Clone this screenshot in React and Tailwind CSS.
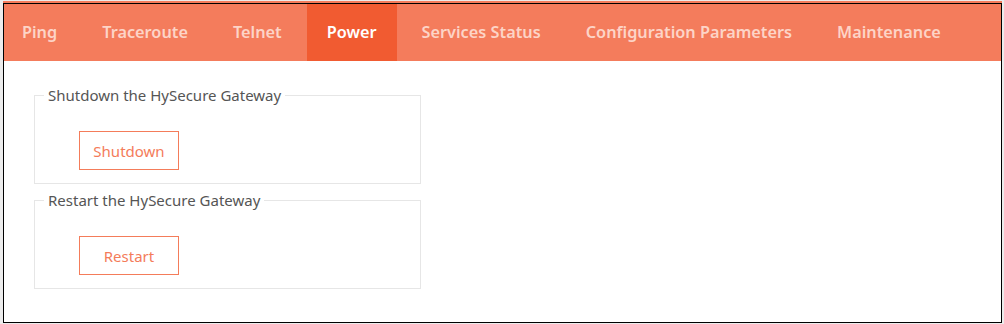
import React from 'react';

const tabs = ['Ping', 'Traceroute', 'Telnet', 'Power', 'Services Status', 'Configuration Parameters', 'Maintenance'];

const Section = ({ title, label }) => (
    <fieldset className="w-[387px] h-[99px] border border-[#e6e6e6] pl-[9px] pt-[26px] m-0">
        <legend className="px-[4px] text-[15px] leading-[20px] text-[#555555]">{title}</legend>
        <button className="ml-[35px] w-[100px] h-[39px] pt-px border border-[#f47c5a] text-[#f47c5a] text-[15px] bg-white">
            {label}
        </button>
    </fieldset>
);

const App = () => {
    const active = 'Power';

    return (
        <div className="w-[1004px] h-[324px] bg-[#ececec] pt-px pl-[3px] pr-[2px]" style={{ fontFamily: '"Noto Sans", "Open Sans", sans-serif' }}>
            <div className="h-[2px] bg-[#f47c5c]" />
            <div className="h-[320px] border border-black bg-white flex flex-col">
                <div className="h-[57px] bg-[#f47c5c] flex items-stretch gap-[5px]">
                    {tabs.map((t, i) => (
                        <div
                            key={t}
                            className={`flex items-center pr-[20px] text-[16.3px] font-semibold ${i === 0 ? 'pl-[18px]' : 'pl-[20px]'} ${t === active ? 'bg-[#f15b31] text-white' : 'text-[#fdd4c7]'}`}
                        >
                            {t}
                        </div>
                    ))}
                </div>
                <div className="pl-[30px] pt-[24px] flex flex-col gap-[6px]">
                    <Section title="Shutdown the HySecure Gateway" label="Shutdown" />
                    <Section title="Restart the HySecure Gateway" label="Restart" />
                </div>
            </div>
        </div>
    );
};

export default App;
